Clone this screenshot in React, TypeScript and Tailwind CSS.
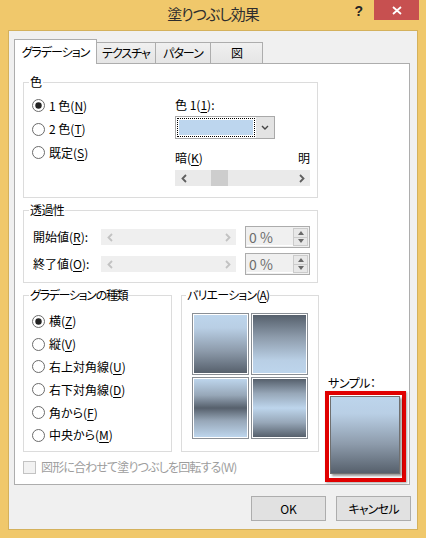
import React from "react";

const U = ({ children }: { children: React.ReactNode }) => <span className="underline underline-offset-[2px] decoration-1">{children}</span>;

const Radio = ({ checked = false }: { checked?: boolean }) => <svg width="13" height="13" viewBox="0 0 13 13" className="shrink-0">
    <circle cx="6.5" cy="6.5" r="6" fill="#fff" stroke="#6b6b6b" />
    {checked && <circle cx="6.5" cy="6.5" r="3.2" fill="#232323" />}
  </svg>;

const RadioRow = ({
  checked = false,
  h,
  children
}: {
  checked?: boolean;
  h: string;
  children: React.ReactNode;
}) => <div className={`flex items-center gap-[4px] ${h}`}>
    <Radio checked={checked} />
    <span className="leading-[14px]">{children}</span>
  </div>;

const Chevron = ({ dir, color }: { dir: "left" | "right"; color: string }) => <svg width="6" height="9" viewBox="0 0 6 9">
    <path d={dir === "left" ? "M5 1 L1.5 4.5 L5 8" : "M1 1 L4.5 4.5 L1 8"} fill="none" stroke={color} strokeWidth="1.8" />
  </svg>;

const ScrollBar = ({ disabled = false }: { disabled?: boolean }) => {
  const color = disabled ? "#c2c2c2" : "#5f5f5f";
  return <div className={`flex h-[16px] w-[135px] shrink-0 ${disabled ? "bg-[#efefef]" : "bg-[#eaeaea]"}`}>
      <div className="flex w-[17px] items-center justify-center">
        <Chevron dir="left" color={color} />
      </div>
      <div className="flex-1">
        {!disabled && <div className="ml-[19px] h-full w-[17px] bg-[#cdcdcd]" />}
      </div>
      <div className="flex w-[17px] items-center justify-center">
        <Chevron dir="right" color={color} />
      </div>
    </div>;
};

const SpinBox = () => <div className="ml-[9px] flex h-[22px] w-[65px] shrink-0 border border-[#acacac] bg-[#f0f0f0] p-px">
    <div className="flex flex-1 items-center border-b border-white pl-[2px] text-[14px] leading-none text-[#6d6d6d]">
      0 %
    </div>
    <div className="flex w-[15px] flex-col">
      <div className="flex flex-1 items-center justify-center border border-[#cbcbcb] bg-[#e8e8e8]">
        <svg width="6" height="4" viewBox="0 0 6 4">
          <path d="M0 4 L3 0 L6 4Z" fill="#6a6a6a" />
        </svg>
      </div>
      <div className="flex flex-1 items-center justify-center border border-t-0 border-[#cbcbcb] bg-[#e8e8e8]">
        <svg width="6" height="4" viewBox="0 0 6 4">
          <path d="M0 0 L3 4 L6 0Z" fill="#6a6a6a" />
        </svg>
      </div>
    </div>
  </div>;

const Tile = ({ gradient }: { gradient: string }) => <div className="h-[62px] border border-[#8a8f95] bg-white p-px">
    <div className={`h-full ${gradient}`} />
  </div>;

const Tab = ({ label, w }: { label: string; w: string }) => <div className={`-ml-px flex h-[21px] items-center justify-center border border-b-0 border-[#adadad] bg-[linear-gradient(to_bottom,#f0f0f0,#e5e5e5)] tracking-[-1px] ${w}`}>
    {label}
  </div>;

export default function App() {
  return <div className="flex h-[538px] w-[426px] flex-col bg-[#f0c86b] px-[8px] pb-[8px] font-['Noto_Sans_CJK_JP','Noto_Sans',sans-serif] text-[12px] text-black [font-feature-settings:'palt']">
      {/* title bar */}
      <div className="grid h-[30px] shrink-0 grid-cols-[1fr_auto_1fr]">
        <div />
        <div className="flex items-center pb-[1px] text-[15px] tracking-[-1px] text-[#2e2e2e]">塗りつぶし効果</div>
        <div className="-mr-px flex items-start justify-end">
          <span className="mr-[11px] mt-[4px] font-['Liberation_Sans',sans-serif] text-[14px] font-bold leading-none text-[#252525]">
            ?
          </span>
          <div className="flex h-[20px] w-[45px] items-center justify-center bg-[#c75050]">
            <svg width="10" height="9" viewBox="0 0 10 9">
              <path d="M1 1 L9 8 M9 1 L1 8" stroke="#fff" strokeWidth="1.8" />
            </svg>
          </div>
        </div>
      </div>

      {/* client */}
      <div className="flex flex-1 flex-col border border-[#d4b15c] bg-[#f0f0f0] pb-[8px] pl-[5px] pr-[7px] pt-[8px]">
        <div className="relative z-10 flex h-[24px] items-end">
          <div className="-mb-px flex h-[25px] w-[83px] items-center justify-center border border-b-0 border-[#adadad] bg-white pb-px tracking-[-1px]">
            グラデーション
          </div>
          <Tab label="テクスチャ" w="w-[60px]" />
          <Tab label="パターン" w="w-[56px]" />
          <Tab label="図" w="w-[53px]" />
        </div>

        <div className="flex h-[422px] border border-[#adadad] bg-white">
          <div className="flex w-[304px] flex-col pl-[8px] pt-[11px]">
            {/* 色 */}
            <fieldset className="h-[123px] w-[295px] border border-[#dcdcdc]">
              <legend className="ml-[5px] px-px leading-[14px]">色</legend>
              <div className="flex">
                <div className="w-[151px] pl-[8px] pt-[5px]">
                  <RadioRow checked h="h-[23.5px]">
                    1 色(<U>N</U>)
                  </RadioRow>
                  <RadioRow h="h-[23.5px]">
                    2 色(<U>T</U>)
                  </RadioRow>
                  <RadioRow h="h-[23.5px]">
                    既定(<U>S</U>)
                  </RadioRow>
                </div>
                <div className="pt-[9px]">
                  <div className="leading-[14px]">
                    色 1(<U>1</U>):
                  </div>
                  <div className="mt-[4px] flex h-[23px] w-[100px] border border-[#a9a9a9] bg-white">
                    <div className="flex-1 p-px">
                      <div className="h-full border border-dotted border-black p-px">
                        <div className="h-full bg-[#bdd6ee]" />
                      </div>
                    </div>
                    <div className="flex w-[18px] items-center justify-center bg-[#e3e3e3]">
                      <svg width="8" height="5" viewBox="0 0 8 5">
                        <path d="M1 1 L4 4 L7 1" fill="none" stroke="#444" strokeWidth="1.4" />
                      </svg>
                    </div>
                  </div>
                  <div className="mt-[12px] flex w-[135px] justify-between leading-[14px]">
                    <span>
                      暗(<U>K</U>)
                    </span>
                    <span>明</span>
                  </div>
                  <div className="mt-[5px]">
                    <ScrollBar />
                  </div>
                </div>
              </div>
            </fieldset>

            {/* 透過性 */}
            <fieldset className="mt-[5px] h-[80px] w-[295px] border border-[#dcdcdc]">
              <legend className="ml-[5px] px-px leading-[14px] tracking-[-0.6px]">透過性</legend>
              <div className="flex flex-col gap-[5px] pl-[9px] pt-[9px]">
                <div className="flex h-[22px] items-center">
                  <span className="w-[68px] leading-[14px]">
                    開始値(<U>R</U>):
                  </span>
                  <ScrollBar disabled />
                  <SpinBox />
                </div>
                <div className="flex h-[22px] items-center">
                  <span className="w-[68px] leading-[14px]">
                    終了値(<U>O</U>):
                  </span>
                  <ScrollBar disabled />
                  <SpinBox />
                </div>
              </div>
            </fieldset>

            <div className="mt-[5px] flex gap-[9px]">
              <fieldset className="h-[164px] w-[149px] border border-[#dcdcdc]">
                <legend className="ml-[5px] px-px leading-[14px] tracking-[-1.3px]">グラデーションの種類</legend>
                <div className="pl-[8px] pt-[8px]">
                  <RadioRow checked h="h-[22.8px]">
                    横(<U>Z</U>)
                  </RadioRow>
                  <RadioRow h="h-[22.8px]">
                    縦(<U>V</U>)
                  </RadioRow>
                  <RadioRow h="h-[22.8px]">
                    右上対角線(<U>U</U>)
                  </RadioRow>
                  <RadioRow h="h-[22.8px]">
                    右下対角線(<U>D</U>)
                  </RadioRow>
                  <RadioRow h="h-[22.8px]">
                    角から(<U>F</U>)
                  </RadioRow>
                  <RadioRow h="h-[22.8px]">
                    中央から(<U>M</U>)
                  </RadioRow>
                </div>
              </fieldset>
              <fieldset className="h-[164px] w-[138px] border border-[#dcdcdc]">
                <legend className="ml-[4px] px-px leading-[14px] tracking-[-0.8px]">
                  バリエーション(<U>A</U>)
                </legend>
                <div className="grid grid-cols-[57px_57px] gap-[2px] pl-[10px] pt-[11px]">
                  <Tile gradient="bg-[linear-gradient(to_bottom,#bdd5ec_0%,#b9cfe5_22%,#8d9bab_62%,#56606c_100%)]" />
                  <Tile gradient="bg-[linear-gradient(to_bottom,#56606c_0%,#8d9bab_38%,#b9cfe5_78%,#bdd5ec_100%)]" />
                  <Tile gradient="bg-[linear-gradient(to_bottom,#bdd5ec_0%,#97a7b8_28%,#56606c_50%,#97a7b8_72%,#bdd5ec_100%)]" />
                  <Tile gradient="bg-[linear-gradient(to_bottom,#56606c_0%,#97a7b8_25%,#bdd5ec_50%,#97a7b8_75%,#56606c_100%)]" />
                </div>
              </fieldset>
            </div>

            <div className="mt-[8px] flex items-center gap-[5px] text-[#9d9d9d]">
              <div className="h-[13px] w-[13px] border border-[#c3c3c3] bg-[#f2f2f2]" />
              <span className="leading-[14px] tracking-[-0.85px]">図形に合わせて塗りつぶしを回転する(W)</span>
            </div>
          </div>

          {/* サンプル */}
          <div className="flex flex-1 flex-col justify-end pb-[2px] pl-[6px]">
            <div className="pl-[3px] leading-[14px] tracking-[-0.5px]">サンプル：</div>
            <div className="mt-[1px] h-[91px] w-[81px] border-[4px] border-[#e00000] bg-white pb-[4px] pl-px pr-[2px] pt-px shadow-[1px_1px_2px_rgba(0,0,0,0.35)]">
              <div className="h-full border border-[#6f6f6f] bg-[linear-gradient(to_bottom,#bdd5ec_0%,#b9cfe5_22%,#8d9bab_62%,#56606c_100%)] shadow-[2px_2px_2px_rgba(0,0,0,0.4)]" />
            </div>
          </div>
        </div>

        <div className="-mr-px mt-[11px] flex justify-end gap-[10px]">
          <div className="flex h-[25px] w-[75px] items-center justify-center border border-[#adadad] bg-[#e1e1e1]">OK</div>
          <div className="flex h-[25px] w-[75px] items-center justify-center border border-[#adadad] bg-[#e1e1e1] tracking-[-0.8px]">
            キャンセル
          </div>
        </div>
      </div>
    </div>;
}
